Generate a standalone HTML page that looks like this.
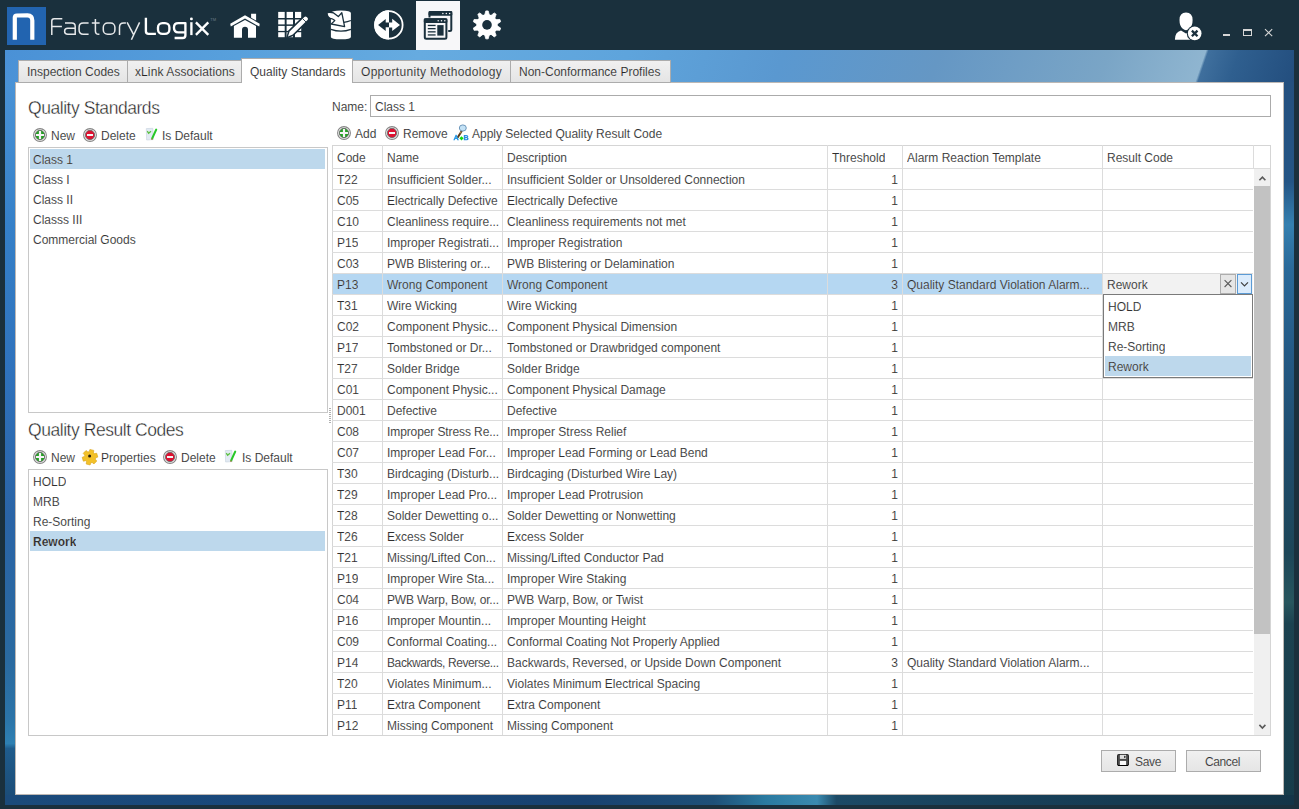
<!DOCTYPE html>
<html><head><meta charset="utf-8"><title>FactoryLogix</title>
<style>
*{margin:0;padding:0;box-sizing:border-box}
html,body{width:1299px;height:809px;overflow:hidden}
body{background:#1a303d;font-family:"Liberation Sans",sans-serif;font-size:12px;color:#2e2e2e;position:relative}
.thin .t,.thin .cell,.thin .tab{-webkit-text-stroke:0.2px rgba(255,255,255,0.6)}
.abs{position:absolute}
svg{position:absolute;overflow:visible}
.t{position:absolute;white-space:nowrap;line-height:14px;padding-top:1px}
.tab{position:absolute;top:60px;height:23px;border:1px solid #acacac;background:linear-gradient(#f0f0f0,#e5e5e5);line-height:20px;padding-left:8px;padding-top:1px;color:#262626;white-space:nowrap}
.hl{position:absolute;height:1px;background:#dcdcdc}
.vl{position:absolute;width:1px;background:#dcdcdc}
.cell{position:absolute;white-space:nowrap;overflow:hidden;line-height:20px;padding-top:1px}
.btn{position:absolute;top:750px;height:22px;border:1px solid #acacac;background:linear-gradient(#f0f0f0,#e5e5e5)}
.ttl{position:absolute;white-space:nowrap;font-size:17.5px;line-height:20px;letter-spacing:-0.45px;color:#1e1e1e;-webkit-text-stroke:0.35px #fff}
</style></head><body class="thin">

<div class="abs" style="left:7px;top:7px;width:39px;height:38px;background:#2264b0"></div>
<svg style="left:0;top:0" width="60" height="50" viewBox="0 0 60 50"><path d="M14.8,39.7 V17.5 Q14.8,15.6 17,15.5 L27.5,15.4 Q32.3,15.6 32.3,20.5 V39.7" fill="none" stroke="#fff" stroke-width="4.2" stroke-linejoin="round"/></svg>
<svg style="left:0;top:0" width="230" height="50" viewBox="0 0 230 50">
<g fill="none" stroke="#e6e8ea" stroke-width="1.5" stroke-linecap="butt" stroke-linejoin="round">
<path d="M51.8,35 V21 Q51.8,18.7 54.1,18.7 H62.3 M51.8,26.6 H61.9"/>
<path d="M65,23 H71.8 Q75.2,23 75.2,26.4 V35 M75.2,28.3 H67.8 Q64.6,28.3 64.6,31.3 Q64.6,34.3 67.8,34.3 H75.2"/>
<path d="M88.6,23 H83.3 Q79.1,23 79.1,27.2 V30.1 Q79.1,34.3 83.3,34.3 H88.6"/>
<path d="M95.4,19 V31 Q95.4,34.3 98.7,34.3 H99.4 M91.8,23 H99.6"/>
<rect x="103.3" y="23" width="11.6" height="11.3" rx="4.3"/>
<path d="M119.5,35 V27.2 Q119.5,23 123.7,23 H125.9"/>
<path d="M127.1,22.4 L133.6,34.6 M139.6,22.4 L131.4,39.8"/>
</g>
<g fill="none" stroke="#ffffff" stroke-width="2.35" stroke-linecap="butt" stroke-linejoin="round">
<path d="M145.9,17.8 V31.3 Q145.9,33.9 148.5,33.9 H155.9"/>
<rect x="158" y="23.1" width="11.4" height="10.8" rx="4.4"/>
<path d="M185.4,32.3 H178.3 Q174,32.3 174,28 V27.3 Q174,23.1 178.3,23.1 H185.4 V35.3 Q185.4,38 182.6,38 H174.6"/>
<path d="M191.4,22.2 V35.1"/>
<path d="M195.9,22.4 L208.3,34.8 M208.3,22.4 L195.9,34.8"/>
</g>
<circle cx="191.4" cy="18.9" r="1.45" fill="#fff"/>
<text x="210.3" y="20.6" font-family="Liberation Sans" font-size="4" fill="#6f7d89">TM</text>
</svg>
<div class="abs" style="left:416px;top:1px;width:44px;height:49px;background:#f7f7f9"></div>
<svg style="left:0;top:0" width="300" height="50" viewBox="0 0 300 50">
<path d="M230.2,23.7 L245,15.2 L259.7,23.7 L259.3,26.6 L245,18.6 L230.8,26.6 Z" fill="#fff"/>
<path d="M251.1,13.7 H256.1 V20.6 L251.1,17.7 Z" fill="#fff"/>
<path d="M233.9,26 L245,19.9 L256,26 V37.8 H248 V29.7 A3,3 0 0 0 242,29.7 V37.8 H233.9 Z" fill="#fff"/>
</svg>
<svg style="left:0;top:0" width="320" height="50" viewBox="0 0 320 50"><g fill="#fff"><rect x="278.2" y="11.9" width="6.5" height="6.1"/><rect x="278.2" y="19.5" width="6.5" height="4.9"/><rect x="278.2" y="25.9" width="6.5" height="5.0"/><rect x="278.2" y="32.2" width="6.5" height="5.0"/><rect x="286.6" y="11.9" width="6.4" height="6.1"/><rect x="286.6" y="19.5" width="6.4" height="4.9"/><rect x="286.6" y="25.9" width="6.4" height="5.0"/><rect x="286.6" y="32.2" width="6.4" height="5.0"/><rect x="295.0" y="11.9" width="6.2" height="6.1"/><rect x="295.0" y="19.5" width="6.2" height="4.9"/><rect x="295.0" y="25.9" width="6.2" height="5.0"/><rect x="295.0" y="32.2" width="6.2" height="5.0"/></g><path d="M287.6,37 L289.3,31.2 L304.3,16.6 Q305.6,15.5 306.9,16.8 L307.8,17.7 Q309,19 307.7,20.2 L292.8,34.8 Z" fill="#1a303d" stroke="#1a303d" stroke-width="2.4" stroke-linejoin="round"/><path d="M288,36.6 L289.6,31.4 L304.4,16.9 Q305.6,15.9 306.7,17 L307.5,17.8 Q308.6,19 307.5,20 L292.7,34.6 Z" fill="#fff"/><path d="M302.6,18.6 L306.1,22.1" stroke="#1a303d" stroke-width="0.9"/></svg>
<svg style="left:0;top:0" width="360" height="50" viewBox="0 0 360 50">
<path d="M330.9,13 Q330.9,10.5 341,10.5 Q350.9,10.5 350.9,13 V37 Q350.9,39.3 341,39.3 Q330.9,39.3 330.9,37 Z" fill="#fff"/>
<path d="M330.9,29.4 Q341,33 350.9,29.4" fill="none" stroke="#1a303d" stroke-width="1.2"/>
<path d="M343.8,22.4 Q347.5,21.8 350.9,20.5" fill="none" stroke="#1a303d" stroke-width="1.2"/>
<path d="M327,12.6 Q330.5,11.8 333.6,12.9 L338.3,16.6 L341.8,12.7 L344.6,26.7 L331.2,24 L334.8,20.6 Q332.6,18.6 330.3,18.4 Q327.2,17.4 327,12.6 Z" fill="#fff" stroke="#1a303d" stroke-width="1.3" stroke-linejoin="round"/>
</svg>
<svg style="left:0;top:0" width="420" height="50" viewBox="0 0 420 50">
<circle cx="388.8" cy="24.9" r="13.8" fill="none" stroke="#fff" stroke-width="1.8"/>
<path d="M389,10.2 A14.7,14.7 0 0 0 389,39.6 Z" fill="#fff"/>
<path d="M378.1,24.9 L385.7,18.9 V22.5 H389 V27.3 H385.7 V30.9 Z" fill="#1a303d"/>
<path d="M400,24.9 L392.2,18.7 V22.4 H389 V27.4 H392.2 V31.1 Z" fill="#fff"/>
</svg>
<svg style="left:0;top:0" width="460" height="50" viewBox="0 0 460 50">
<rect x="429.5" y="11.9" width="21.8" height="19.1" rx="1.5" fill="none" stroke="#1a303d" stroke-width="2"/>
<rect x="428.5" y="10.9" width="23.8" height="4.9" rx="1.2" fill="#1a303d"/>
<rect x="423" y="17.4" width="25.2" height="23.2" rx="1.5" fill="#f7f7f9"/>
<rect x="424.8" y="19.2" width="21.6" height="19.6" rx="1.5" fill="none" stroke="#1a303d" stroke-width="2"/>
<rect x="423.8" y="18.2" width="23.6" height="4.7" rx="1.2" fill="#1a303d"/>
<g fill="#f7f7f9"><circle cx="442.9" cy="13.6" r="0.75"/><circle cx="446.3" cy="13.6" r="0.75"/><circle cx="449.6" cy="13.6" r="0.75"/>
<circle cx="438.2" cy="20.7" r="0.75"/><circle cx="441.5" cy="20.7" r="0.75"/><circle cx="444.8" cy="20.7" r="0.75"/></g>
<g fill="#1a303d"><rect x="427.8" y="24.8" width="7.8" height="1.3"/><rect x="427.8" y="28" width="7.8" height="1.3"/><rect x="427.8" y="31.2" width="7.8" height="1.3"/><rect x="427.8" y="34.3" width="7.8" height="1.3"/>
<rect x="437.3" y="25.1" width="6.3" height="10.5"/></g>
</svg>
<svg style="left:0;top:0" width="510" height="50" viewBox="0 0 510 50"><circle cx="487.00" cy="24.90" r="10.7" fill="#fff"/><path d="M484.34,16.30 L485.81,10.95 L488.19,10.95 L489.66,16.30 Z M489.90,16.38 L494.24,12.92 L496.16,14.31 L494.21,19.51 Z M494.36,19.71 L499.90,19.46 L500.63,21.72 L496.00,24.77 Z M496.00,25.03 L500.63,28.08 L499.90,30.34 L494.36,30.09 Z M494.21,30.29 L496.16,35.49 L494.24,36.88 L489.90,33.42 Z M489.66,33.50 L488.19,38.85 L485.81,38.85 L484.34,33.50 Z M484.10,33.42 L479.76,36.88 L477.84,35.49 L479.79,30.29 Z M479.64,30.09 L474.10,30.34 L473.37,28.08 L478.00,25.03 Z M478.00,24.77 L473.37,21.72 L474.10,19.46 L479.64,19.71 Z M479.79,19.51 L477.84,14.31 L479.76,12.92 L484.10,16.38 Z" fill="#fff" stroke="#fff" stroke-width="0.8" stroke-linejoin="round"/><circle cx="487.00" cy="24.90" r="4.8" fill="#1a303d"/></svg>
<svg style="left:0;top:0" width="1210" height="50" viewBox="0 0 1210 50">
<path d="M1186,12.5 Q1192.6,12.5 1192.6,20 Q1192.6,26 1189.5,28.5 Q1187.5,30.2 1186,30.2 Q1184.5,30.2 1182.5,28.5 Q1179.5,26 1179.5,20 Q1179.5,12.5 1186,12.5 Z" fill="#fff"/>
<path d="M1174.9,39.8 Q1174.9,32.2 1181,30.6 L1186,33.5 L1191,30.6 Q1195,31.8 1196,36 V39.8 Z" fill="#fff"/>
<circle cx="1194.7" cy="33.4" r="7.9" fill="#1a303d"/>
<circle cx="1194.7" cy="33.4" r="6.8" fill="#fff"/>
<path d="M1191.9,30.6 L1197.5,36.2 M1197.5,30.6 L1191.9,36.2" stroke="#1a303d" stroke-width="2.3"/>
</svg>
<div class="abs" style="left:1223px;top:33.6px;width:7px;height:2.6px;background:#d6d6d6"></div>
<div class="abs" style="left:1243px;top:29px;width:9px;height:7px;border:1px solid #d6d6d6;border-top-width:2px"></div>
<svg style="left:0;top:0" width="1290" height="50" viewBox="0 0 1290 50"><path d="M1265,29.2 L1272.2,36.2 M1272.2,29.2 L1265,36.2" stroke="#d6d6d6" stroke-width="1.1"/></svg>
<div class="abs" style="left:5px;top:50px;width:1289px;height:755px;background:#245a88"></div>
<div class="abs" style="left:5px;top:50px;width:1289px;height:32px;background:linear-gradient(109deg, #4a91d6 0%, #58a0dc 18%, #66abe0 32%, #5ea4dc 48%, #5a98d0 60%, #6597c4 72%, #7aa5c6 85%, #8fb5d0 92.4%, #3f6f9d 92.6%, #2f5f8f 95%, #234e7e 100%)"></div>
<div class="abs" style="left:5px;top:82px;width:10px;height:723px;background:linear-gradient(#4a93d6 0%,#3580c8 20%,#2f72bc 40%,#2a64a6 60%,#2a6aa0 80%,#2b74a8 88%,#2e80b2 91.5%,#1f5c8c 92.2%,#1b4a74 100%)"></div>
<div class="abs" style="left:5px;top:795px;width:1289px;height:10px;background:linear-gradient(90deg,#1b4b7b 0%,#19477a 25%,#184270 45%,#1e5078 55%,#2a7aa0 59%,#3a8ab0 63%,#1c4a66 64.5%,#173f58 80%,#143548 100%)"></div>
<div class="abs" style="left:1284px;top:82px;width:10px;height:713px;background:linear-gradient(#24507f 0%,#245585 14%,#3580b0 20%,#2a6a9a 26%,#245a85 38%,#1f4c6c 52%,#1d4658 66%,#28565e 73%,#1c4250 76%,#173c4a 100%)"></div>
<div class="abs" style="left:15px;top:82px;width:1269px;height:713px;background:#fff;border:1px solid #bdb8b4"></div>
<div class="tab" style="left:18px;width:110px;">Inspection Codes</div>
<div class="tab" style="left:127px;width:115px;padding-left:7px;letter-spacing:0.1px">xLink Associations</div>
<div class="tab" style="left:352px;width:160px;letter-spacing:0.3px">Opportunity Methodology</div>
<div class="tab" style="left:510px;width:161px;">Non-Conformance Profiles</div>
<div class="tab" style="left:241px;top:58px;width:112px;height:25px;background:#fff;border-bottom:none;line-height:24px;padding-left:8px">Quality Standards</div>
<div class="ttl" style="left:28px;top:98px">Quality Standards</div>
<div class="ttl" style="left:28px;top:420px">Quality Result Codes</div>
<svg style="left:33px;top:128px" width="15" height="15" viewBox="0 0 15 15"><circle cx="7" cy="7" r="6.4" fill="#fff" stroke="#858585" stroke-width="1.1"/><circle cx="7" cy="7" r="4.7" fill="#24a024" stroke="#6a6a6a" stroke-width="0.9"/><path d="M7,3 V11 M3,7 H11" stroke="#f4f4f4" stroke-width="2.2"/></svg>
<div class="t" style="left:51px;top:128px">New</div>
<svg style="left:83px;top:128px" width="15" height="15" viewBox="0 0 15 15"><circle cx="7" cy="7" r="6.4" fill="#fff" stroke="#858585" stroke-width="1.1"/><circle cx="7" cy="7" r="4.7" fill="#de1030" stroke="#6a6a6a" stroke-width="0.9"/><path d="M4,7 H10" stroke="#f4f4f4" stroke-width="2"/></svg>
<div class="t" style="left:101px;top:128px">Delete</div>
<svg style="left:145.5px;top:128px" width="14" height="14" viewBox="0 0 14 14"><path d="M0.3,0.6 L6.8,0.3 L7.3,11.6 L0.6,12 Z" fill="#e2eaf3" stroke="#c6d2de" stroke-width="0.6"/><path d="M1.3,3.2 L2.6,5.3 L5,3.2" fill="none" stroke="#5cc040" stroke-width="1.3"/><path d="M6.2,10.4 L10.2,1.6" stroke="#28c828" stroke-width="2.1" stroke-linecap="round"/><path d="M6.1,10.5 L5.7,11.8" stroke="#a08040" stroke-width="1.4"/></svg>
<div class="t" style="left:162px;top:128px">Is Default</div>
<div class="abs" style="left:28px;top:147px;width:300px;height:266px;border:1px solid #c8c8c8"></div>
<div class="abs" style="left:30px;top:149px;width:295px;height:20px;background:#bdd8ec"></div>
<div class="cell" style="left:33px;top:149px">Class 1</div>
<div class="cell" style="left:33px;top:169px">Class I</div>
<div class="cell" style="left:33px;top:189px">Class II</div>
<div class="cell" style="left:33px;top:209px">Classs III</div>
<div class="cell" style="left:33px;top:229px">Commercial Goods</div>
<div class="abs" style="left:329px;top:408px;width:2px;height:15px;background:repeating-linear-gradient(#b0b0b0 0 1px,transparent 1px 2px)"></div>
<svg style="left:33px;top:450px" width="15" height="15" viewBox="0 0 15 15"><circle cx="7" cy="7" r="6.4" fill="#fff" stroke="#858585" stroke-width="1.1"/><circle cx="7" cy="7" r="4.7" fill="#24a024" stroke="#6a6a6a" stroke-width="0.9"/><path d="M7,3 V11 M3,7 H11" stroke="#f4f4f4" stroke-width="2.2"/></svg>
<div class="t" style="left:51px;top:450px">New</div>
<svg style="left:81.5px;top:448.5px" width="17" height="17" viewBox="0 0 17 17"><path d="M7.05,2.68 L7.92,0.40 L11.81,1.39 L11.48,3.81 L12.31,4.62 L14.72,4.23 L15.80,8.09 L13.54,9.02 L13.25,10.14 L14.79,12.03 L11.99,14.90 L10.06,13.41 L8.95,13.72 L8.08,16.00 L4.19,15.01 L4.52,12.59 L3.69,11.78 L1.28,12.17 L0.20,8.31 L2.46,7.38 L2.75,6.26 L1.21,4.37 L4.01,1.50 L5.94,2.99 Z" fill="#f2c12a" stroke="#d9a21a" stroke-width="0.6" stroke-linejoin="round"/><circle cx="7.6" cy="7" r="1.5" fill="#2a2010"/></svg>
<div class="t" style="left:101px;top:450px">Properties</div>
<svg style="left:162.5px;top:450px" width="15" height="15" viewBox="0 0 15 15"><circle cx="7" cy="7" r="6.4" fill="#fff" stroke="#858585" stroke-width="1.1"/><circle cx="7" cy="7" r="4.7" fill="#de1030" stroke="#6a6a6a" stroke-width="0.9"/><path d="M4,7 H10" stroke="#f4f4f4" stroke-width="2"/></svg>
<div class="t" style="left:181px;top:450px">Delete</div>
<svg style="left:224.5px;top:450px" width="14" height="14" viewBox="0 0 14 14"><path d="M0.3,0.6 L6.8,0.3 L7.3,11.6 L0.6,12 Z" fill="#e2eaf3" stroke="#c6d2de" stroke-width="0.6"/><path d="M1.3,3.2 L2.6,5.3 L5,3.2" fill="none" stroke="#5cc040" stroke-width="1.3"/><path d="M6.2,10.4 L10.2,1.6" stroke="#28c828" stroke-width="2.1" stroke-linecap="round"/><path d="M6.1,10.5 L5.7,11.8" stroke="#a08040" stroke-width="1.4"/></svg>
<div class="t" style="left:242px;top:450px">Is Default</div>
<div class="abs" style="left:28px;top:469px;width:300px;height:267px;border:1px solid #c8c8c8"></div>
<div class="abs" style="left:30px;top:531px;width:295px;height:20px;background:#bdd8ec"></div>
<div class="cell" style="left:33px;top:471px;">HOLD</div>
<div class="cell" style="left:33px;top:491px;">MRB</div>
<div class="cell" style="left:33px;top:511px;">Re-Sorting</div>
<div class="cell" style="left:33px;top:531px;font-weight:bold">Rework</div>
<div class="t" style="left:332px;top:99px">Name:</div>
<div class="abs" style="left:370px;top:95px;width:901px;height:22px;border:1px solid #ababab"></div>
<div class="t" style="left:375px;top:99px">Class 1</div>
<svg style="left:337px;top:126px" width="15" height="15" viewBox="0 0 15 15"><circle cx="7" cy="7" r="6.4" fill="#fff" stroke="#858585" stroke-width="1.1"/><circle cx="7" cy="7" r="4.7" fill="#24a024" stroke="#6a6a6a" stroke-width="0.9"/><path d="M7,3 V11 M3,7 H11" stroke="#f4f4f4" stroke-width="2.2"/></svg>
<div class="t" style="left:355px;top:126px">Add</div>
<svg style="left:385px;top:126px" width="15" height="15" viewBox="0 0 15 15"><circle cx="7" cy="7" r="6.4" fill="#fff" stroke="#858585" stroke-width="1.1"/><circle cx="7" cy="7" r="4.7" fill="#de1030" stroke="#6a6a6a" stroke-width="0.9"/><path d="M4,7 H10" stroke="#f4f4f4" stroke-width="2"/></svg>
<div class="t" style="left:403px;top:126px">Remove</div>
<svg style="left:450px;top:122px" width="24" height="22" viewBox="0 0 24 22">
<path d="M11.6,9.2 L7.8,15.2" stroke="#5a3a1a" stroke-width="2" stroke-linecap="round"/>
<path d="M11.2,9.8 L10.2,11.4" stroke="#c8a060" stroke-width="1"/>
<ellipse cx="12.8" cy="6" rx="3.5" ry="3.1" fill="#c4e2f6" stroke="#6e98bc" stroke-width="1"/>
<path d="M3.3,18.3 L5.6,12.8 H6.6 L8.9,18.3 H7.3 L6.8,17 H5.3 L4.8,18.3 Z M5.7,15.8 H6.4 L6.1,14.8 Z" fill="#2a9ae6"/>
<path d="M13.8,12.9 H16.3 Q18.3,12.9 18.3,14.4 Q18.3,15.2 17.5,15.5 Q18.6,15.8 18.6,16.8 Q18.6,18.3 16.5,18.3 H13.8 Z M15.4,14 V15 H16.2 Q16.8,15 16.8,14.5 Q16.8,14 16.2,14 Z M15.4,16.1 V17.2 H16.3 Q17,17.2 17,16.6 Q17,16.1 16.3,16.1 Z" fill="#2a8ee0" fill-rule="evenodd"/>
<path d="M11.5,14.2 L13.6,16.3 L11.5,18.5 L9.4,16.3 Z" fill="#14d814"/></svg>
<div class="t" style="left:472px;top:126px">Apply Selected Quality Result Code</div>
<div class="abs" style="left:332px;top:145px;width:939px;height:591px;border:1px solid #d5d5d5;background:#fff"></div>
<div class="hl" style="left:332px;top:168px;width:938px"></div>
<div class="abs" style="left:333px;top:273px;width:769px;height:21px;background:#b5d7f2"></div>
<div class="hl" style="left:332px;top:189px;width:921px"></div>
<div class="hl" style="left:332px;top:210px;width:921px"></div>
<div class="hl" style="left:332px;top:231px;width:921px"></div>
<div class="hl" style="left:332px;top:252px;width:921px"></div>
<div class="hl" style="left:332px;top:273px;width:921px"></div>
<div class="hl" style="left:332px;top:294px;width:921px"></div>
<div class="hl" style="left:332px;top:315px;width:921px"></div>
<div class="hl" style="left:332px;top:336px;width:921px"></div>
<div class="hl" style="left:332px;top:357px;width:921px"></div>
<div class="hl" style="left:332px;top:378px;width:921px"></div>
<div class="hl" style="left:332px;top:399px;width:921px"></div>
<div class="hl" style="left:332px;top:420px;width:921px"></div>
<div class="hl" style="left:332px;top:441px;width:921px"></div>
<div class="hl" style="left:332px;top:462px;width:921px"></div>
<div class="hl" style="left:332px;top:483px;width:921px"></div>
<div class="hl" style="left:332px;top:504px;width:921px"></div>
<div class="hl" style="left:332px;top:525px;width:921px"></div>
<div class="hl" style="left:332px;top:546px;width:921px"></div>
<div class="hl" style="left:332px;top:567px;width:921px"></div>
<div class="hl" style="left:332px;top:588px;width:921px"></div>
<div class="hl" style="left:332px;top:609px;width:921px"></div>
<div class="hl" style="left:332px;top:630px;width:921px"></div>
<div class="hl" style="left:332px;top:651px;width:921px"></div>
<div class="hl" style="left:332px;top:672px;width:921px"></div>
<div class="hl" style="left:332px;top:693px;width:921px"></div>
<div class="hl" style="left:332px;top:714px;width:921px"></div>
<div class="vl" style="left:382px;top:145px;height:590px"></div>
<div class="vl" style="left:502px;top:145px;height:590px"></div>
<div class="vl" style="left:827px;top:145px;height:590px"></div>
<div class="vl" style="left:902px;top:145px;height:590px"></div>
<div class="vl" style="left:1102px;top:145px;height:590px"></div>
<div class="vl" style="left:1253px;top:145px;height:23px"></div>
<div class="abs" style="left:1254px;top:169px;width:16px;height:566px;background:#f0f0f0"></div>
<div class="abs" style="left:1254px;top:186px;width:16px;height:448px;background:#c2c2c2"></div>
<svg style="left:1254px;top:172px" width="16" height="12" viewBox="0 0 16 12"><path d="M5.4,8.3 L8.4,5.1 L11.4,8.3" fill="none" stroke="#5a5a5a" stroke-width="1.6"/></svg>
<svg style="left:1254px;top:721px" width="16" height="12" viewBox="0 0 16 12"><path d="M5.4,3.9 L8.4,7.1 L11.4,3.9" fill="none" stroke="#5a5a5a" stroke-width="1.6"/></svg>
<div class="cell" style="left:337px;top:146px;line-height:22px">Code</div>
<div class="cell" style="left:387px;top:146px;line-height:22px">Name</div>
<div class="cell" style="left:507px;top:146px;line-height:22px">Description</div>
<div class="cell" style="left:832px;top:146px;line-height:22px">Threshold</div>
<div class="cell" style="left:907px;top:146px;line-height:22px">Alarm Reaction Template</div>
<div class="cell" style="left:1107px;top:146px;line-height:22px">Result Code</div>
<div class="cell" style="left:337px;top:169px">T22</div>
<div class="cell" style="left:387px;top:169px;width:114px">Insufficient Solder...</div>
<div class="cell" style="left:507px;top:169px;width:319px">Insufficient Solder or Unsoldered Connection</div>
<div class="cell" style="left:828px;top:169px;width:70px;text-align:right">1</div>
<div class="cell" style="left:337px;top:190px">C05</div>
<div class="cell" style="left:387px;top:190px;width:114px">Electrically Defective</div>
<div class="cell" style="left:507px;top:190px;width:319px">Electrically Defective</div>
<div class="cell" style="left:828px;top:190px;width:70px;text-align:right">1</div>
<div class="cell" style="left:337px;top:211px">C10</div>
<div class="cell" style="left:387px;top:211px;width:114px;letter-spacing:-0.03px">Cleanliness require...</div>
<div class="cell" style="left:507px;top:211px;width:319px">Cleanliness requirements not met</div>
<div class="cell" style="left:828px;top:211px;width:70px;text-align:right">1</div>
<div class="cell" style="left:337px;top:232px">P15</div>
<div class="cell" style="left:387px;top:232px;width:114px;letter-spacing:-0.00px">Improper Registrati...</div>
<div class="cell" style="left:507px;top:232px;width:319px">Improper Registration</div>
<div class="cell" style="left:828px;top:232px;width:70px;text-align:right">1</div>
<div class="cell" style="left:337px;top:253px">C03</div>
<div class="cell" style="left:387px;top:253px;width:114px">PWB Blistering or...</div>
<div class="cell" style="left:507px;top:253px;width:319px">PWB Blistering or Delamination</div>
<div class="cell" style="left:828px;top:253px;width:70px;text-align:right">1</div>
<div class="cell" style="left:337px;top:274px">P13</div>
<div class="cell" style="left:387px;top:274px;width:114px">Wrong Component</div>
<div class="cell" style="left:507px;top:274px;width:319px">Wrong Component</div>
<div class="cell" style="left:828px;top:274px;width:70px;text-align:right">3</div>
<div class="cell" style="left:907px;top:274px;width:194px">Quality Standard Violation Alarm...</div>
<div class="cell" style="left:337px;top:295px">T31</div>
<div class="cell" style="left:387px;top:295px;width:114px">Wire Wicking</div>
<div class="cell" style="left:507px;top:295px;width:319px">Wire Wicking</div>
<div class="cell" style="left:828px;top:295px;width:70px;text-align:right">1</div>
<div class="cell" style="left:337px;top:316px">C02</div>
<div class="cell" style="left:387px;top:316px;width:114px">Component Physic...</div>
<div class="cell" style="left:507px;top:316px;width:319px">Component Physical Dimension</div>
<div class="cell" style="left:828px;top:316px;width:70px;text-align:right">1</div>
<div class="cell" style="left:337px;top:337px">P17</div>
<div class="cell" style="left:387px;top:337px;width:114px">Tombstoned or Dr...</div>
<div class="cell" style="left:507px;top:337px;width:319px">Tombstoned or Drawbridged component</div>
<div class="cell" style="left:828px;top:337px;width:70px;text-align:right">1</div>
<div class="cell" style="left:337px;top:358px">T27</div>
<div class="cell" style="left:387px;top:358px;width:114px">Solder Bridge</div>
<div class="cell" style="left:507px;top:358px;width:319px">Solder Bridge</div>
<div class="cell" style="left:828px;top:358px;width:70px;text-align:right">1</div>
<div class="cell" style="left:337px;top:379px">C01</div>
<div class="cell" style="left:387px;top:379px;width:114px">Component Physic...</div>
<div class="cell" style="left:507px;top:379px;width:319px">Component Physical Damage</div>
<div class="cell" style="left:828px;top:379px;width:70px;text-align:right">1</div>
<div class="cell" style="left:337px;top:400px">D001</div>
<div class="cell" style="left:387px;top:400px;width:114px">Defective</div>
<div class="cell" style="left:507px;top:400px;width:319px">Defective</div>
<div class="cell" style="left:828px;top:400px;width:70px;text-align:right">1</div>
<div class="cell" style="left:337px;top:421px">C08</div>
<div class="cell" style="left:387px;top:421px;width:114px;letter-spacing:-0.10px">Improper Stress Re...</div>
<div class="cell" style="left:507px;top:421px;width:319px">Improper Stress Relief</div>
<div class="cell" style="left:828px;top:421px;width:70px;text-align:right">1</div>
<div class="cell" style="left:337px;top:442px">C07</div>
<div class="cell" style="left:387px;top:442px;width:114px">Improper Lead For...</div>
<div class="cell" style="left:507px;top:442px;width:319px">Improper Lead Forming or Lead Bend</div>
<div class="cell" style="left:828px;top:442px;width:70px;text-align:right">1</div>
<div class="cell" style="left:337px;top:463px">T30</div>
<div class="cell" style="left:387px;top:463px;width:114px;letter-spacing:-0.00px">Birdcaging (Disturb...</div>
<div class="cell" style="left:507px;top:463px;width:319px">Birdcaging (Disturbed Wire Lay)</div>
<div class="cell" style="left:828px;top:463px;width:70px;text-align:right">1</div>
<div class="cell" style="left:337px;top:484px">T29</div>
<div class="cell" style="left:387px;top:484px;width:114px">Improper Lead Pro...</div>
<div class="cell" style="left:507px;top:484px;width:319px">Improper Lead Protrusion</div>
<div class="cell" style="left:828px;top:484px;width:70px;text-align:right">1</div>
<div class="cell" style="left:337px;top:505px">T28</div>
<div class="cell" style="left:387px;top:505px;width:114px">Solder Dewetting o...</div>
<div class="cell" style="left:507px;top:505px;width:319px">Solder Dewetting or Nonwetting</div>
<div class="cell" style="left:828px;top:505px;width:70px;text-align:right">1</div>
<div class="cell" style="left:337px;top:526px">T26</div>
<div class="cell" style="left:387px;top:526px;width:114px">Excess Solder</div>
<div class="cell" style="left:507px;top:526px;width:319px">Excess Solder</div>
<div class="cell" style="left:828px;top:526px;width:70px;text-align:right">1</div>
<div class="cell" style="left:337px;top:547px">T21</div>
<div class="cell" style="left:387px;top:547px;width:114px">Missing/Lifted Con...</div>
<div class="cell" style="left:507px;top:547px;width:319px">Missing/Lifted Conductor Pad</div>
<div class="cell" style="left:828px;top:547px;width:70px;text-align:right">1</div>
<div class="cell" style="left:337px;top:568px">P19</div>
<div class="cell" style="left:387px;top:568px;width:114px">Improper Wire Sta...</div>
<div class="cell" style="left:507px;top:568px;width:319px">Improper Wire Staking</div>
<div class="cell" style="left:828px;top:568px;width:70px;text-align:right">1</div>
<div class="cell" style="left:337px;top:589px">C04</div>
<div class="cell" style="left:387px;top:589px;width:114px;letter-spacing:-0.15px">PWB Warp, Bow, or...</div>
<div class="cell" style="left:507px;top:589px;width:319px">PWB Warp, Bow, or Twist</div>
<div class="cell" style="left:828px;top:589px;width:70px;text-align:right">1</div>
<div class="cell" style="left:337px;top:610px">P16</div>
<div class="cell" style="left:387px;top:610px;width:114px">Improper Mountin...</div>
<div class="cell" style="left:507px;top:610px;width:319px">Improper Mounting Height</div>
<div class="cell" style="left:828px;top:610px;width:70px;text-align:right">1</div>
<div class="cell" style="left:337px;top:631px">C09</div>
<div class="cell" style="left:387px;top:631px;width:114px">Conformal Coating...</div>
<div class="cell" style="left:507px;top:631px;width:319px">Conformal Coating Not Properly Applied</div>
<div class="cell" style="left:828px;top:631px;width:70px;text-align:right">1</div>
<div class="cell" style="left:337px;top:652px">P14</div>
<div class="cell" style="left:387px;top:652px;width:114px;letter-spacing:-0.40px">Backwards, Reverse...</div>
<div class="cell" style="left:507px;top:652px;width:319px">Backwards, Reversed, or Upside Down Component</div>
<div class="cell" style="left:828px;top:652px;width:70px;text-align:right">3</div>
<div class="cell" style="left:907px;top:652px;width:194px">Quality Standard Violation Alarm...</div>
<div class="cell" style="left:337px;top:673px">T20</div>
<div class="cell" style="left:387px;top:673px;width:114px">Violates Minimum...</div>
<div class="cell" style="left:507px;top:673px;width:319px">Violates Minimum Electrical Spacing</div>
<div class="cell" style="left:828px;top:673px;width:70px;text-align:right">1</div>
<div class="cell" style="left:337px;top:694px">P11</div>
<div class="cell" style="left:387px;top:694px;width:114px">Extra Component</div>
<div class="cell" style="left:507px;top:694px;width:319px">Extra Component</div>
<div class="cell" style="left:828px;top:694px;width:70px;text-align:right">1</div>
<div class="cell" style="left:337px;top:715px">P12</div>
<div class="cell" style="left:387px;top:715px;width:114px">Missing Component</div>
<div class="cell" style="left:507px;top:715px;width:319px">Missing Component</div>
<div class="cell" style="left:828px;top:715px;width:70px;text-align:right">1</div>
<div class="abs" style="left:1103px;top:274px;width:150px;height:20px;background:#f2f2f2"></div>
<div class="cell" style="left:1107px;top:274px">Rework</div>
<div class="abs" style="left:1220px;top:274px;width:16px;height:20px;border:1px solid #adadad;background:#e6e6e6"></div>
<svg style="left:1220px;top:274px" width="16" height="20" viewBox="0 0 16 20"><path d="M4.6,6.2 L11.4,13 M11.4,6.2 L4.6,13" stroke="#5a5a5a" stroke-width="1.1"/></svg>
<div class="abs" style="left:1237px;top:274px;width:15px;height:20px;border:1px solid #5b9bd5;background:#dcecfc"></div>
<svg style="left:1237px;top:274px" width="15" height="20" viewBox="0 0 15 20"><path d="M4,8.3 L7.5,11.8 L11,8.3" fill="none" stroke="#404040" stroke-width="1.2"/></svg>
<div class="abs" style="left:1103px;top:294px;width:150px;height:84px;border:1px solid #7a7a7a;background:#fff"></div>
<div class="abs" style="left:1105px;top:356px;width:146px;height:20px;background:#bdd8ec"></div>
<div class="cell" style="left:1108px;top:296px">HOLD</div>
<div class="cell" style="left:1108px;top:316px">MRB</div>
<div class="cell" style="left:1108px;top:336px">Re-Sorting</div>
<div class="cell" style="left:1108px;top:356px">Rework</div>
<div class="btn" style="left:1101px;width:75px"></div>
<svg style="left:1117px;top:754px" width="12" height="12" viewBox="0 0 12 12">
<rect x="0" y="0" width="12" height="12" rx="1.8" fill="#262626"/>
<rect x="1" y="1" width="10" height="10" rx="1" fill="#4a4a4a"/>
<rect x="2.9" y="0.8" width="6.2" height="4.1" fill="#dcdcdc"/><rect x="7.2" y="1.7" width="1.2" height="2.3" rx="0.5" fill="#202020"/>
<rect x="2.9" y="6.9" width="6.2" height="4.2" fill="#fafafa"/><rect x="1" y="11" width="10" height="1" fill="#000"/></svg>
<div class="t" style="left:1135px;top:754px;letter-spacing:-0.3px">Save</div>
<div class="btn" style="left:1186px;width:75px"></div>
<div class="t" style="left:1205px;top:754px;letter-spacing:-0.4px">Cancel</div>
</body></html>
